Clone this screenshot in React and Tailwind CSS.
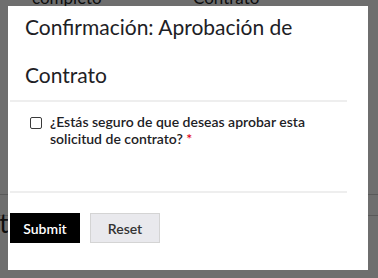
export default function App() {
  return (
    <div className="relative w-[378px] h-[278px] overflow-hidden bg-white font-['Lato','Liberation_Sans',sans-serif] text-[#1f1f1f]">
      {/* page behind the dialog */}
      <div className="flex flex-col">
        <div className="flex text-[17px] leading-[20px] -mt-[12px]">
          <span className="ml-[32px] w-[161px]">completo</span>
          <span>Contrato</span>
        </div>
        <div className="mt-[186px] h-[22px] border-t border-[#cfcfcf] border-b" />
        <div className="flex items-center h-[30px] text-[26px] -mt-[8px] -ml-[15px]">
          <span>nt</span>
        </div>
      </div>

      <div className="absolute inset-0 bg-black/[0.57]" />

      <div className="absolute left-[8px] top-[6px] w-[360px] h-[264px] bg-white flex flex-col">
        <h2 className="-mt-[3px] pl-[17px] pr-[20px] text-[21px] leading-[48px] font-normal text-[#1d2125]">
          Confirmación: Aprobación de Contrato
        </h2>
        <div className="ml-[2px] w-[337px] h-[2px] bg-[#eeeeee] mt-[1px]" />

        <label className="flex items-start mt-[11px] pl-[22px] pr-[40px] text-[14px] leading-[17px] font-semibold text-[#1d2125]">
          <span className="mt-[4px] w-[12px] h-[12px] shrink-0 border-[1.5px] border-[#3a3a3a] rounded-[2px]" />
          <span className="ml-[8px]">
            ¿Estás seguro de que deseas aprobar esta solicitud de contrato?{' '}
            <span className="text-[#e0001b]">*</span>
          </span>
        </label>

        <div className="ml-[2px] w-[337px] h-[2px] bg-[#eeeeee] mt-[44px]" />

        <div className="flex gap-[10px] mt-[20px] ml-[2px]">
          <button className="w-[70px] h-[30px] bg-black text-white text-[14px] font-semibold">
            Submit
          </button>
          <button className="w-[70px] h-[30px] bg-[#e9e9ed] border border-[#d4d4d4] text-[#333] text-[14px] font-semibold">
            Reset
          </button>
        </div>
      </div>
    </div>
  )
}
